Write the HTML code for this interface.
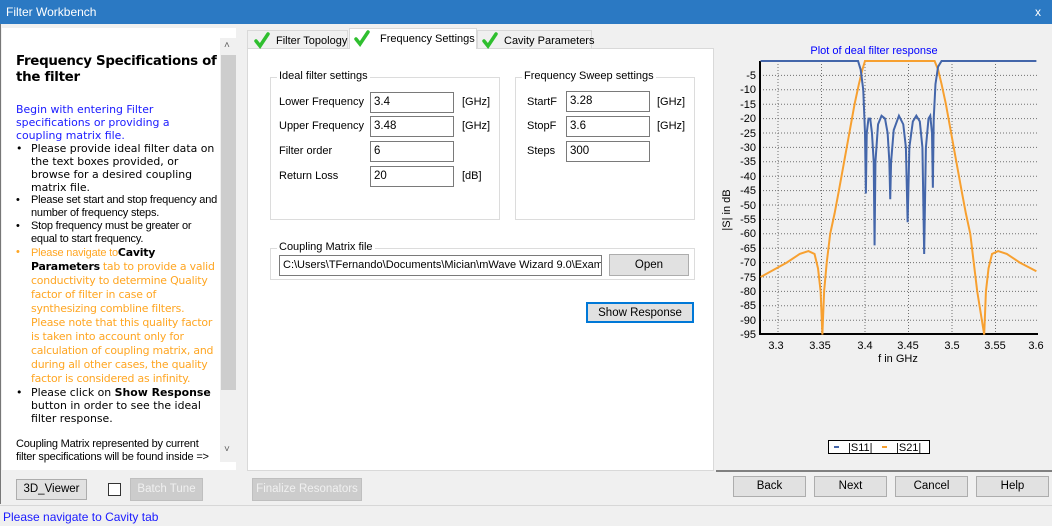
<!DOCTYPE html>
<html><head><meta charset="utf-8"><style>
*{margin:0;padding:0;box-sizing:border-box}
body{width:1052px;height:526px;overflow:hidden;background:#f0f0f0;font-family:"Liberation Sans",Arial,sans-serif;font-size:11px;color:#000;position:relative}
.a{position:absolute;white-space:nowrap}
.v{font-family:"DejaVu Sans",Verdana,sans-serif;font-size:10.9px;line-height:13px;white-space:normal}
.s{font-size:11px;line-height:13px;white-space:normal;letter-spacing:-0.2px}
.btn{position:absolute;background:#e1e1e1;border:1px solid #adadad;text-align:center;font-size:11.5px;white-space:nowrap}
.inp{position:absolute;background:#fff;border:1px solid #7a7a7a;font-size:11.5px;padding:3px 0 0 3px;height:21px;white-space:nowrap}
.gb{position:absolute;border:1px solid #dcdcdc}
.gb span{position:absolute;top:-8px;left:6px;background:#fff;padding:0 2px;font-size:11px;white-space:nowrap}
.lbl{position:absolute;font-size:11px;white-space:nowrap}
</style></head><body>
<div class="a" style="left:0;top:0;width:1052px;height:24px;background:#2b79c3;color:#fff;font-size:12px;padding:5px 0 0 6px">Filter Workbench</div>
<div class="a" style="right:0;top:0;width:28px;height:24px;background:#2b79c3;color:#fff;font-size:12px;text-align:center;padding-top:5px">x</div>
<div class="a" style="left:0;top:24px;width:1px;height:480px;background:#777"></div>
<!-- left pane -->
<div class="a" style="left:2px;top:28px;width:234px;height:442px;background:#fff;overflow:hidden">
 <div class="a" style="left:14px;top:26px;width:212px;font-family:'DejaVu Sans',Verdana,sans-serif;font-weight:bold;font-size:13.4px;line-height:16px;letter-spacing:-0.3px;white-space:normal">Frequency Specifications of the filter</div>
 <div class="a v" style="left:14px;top:75px;width:200px;color:#1a1aff">Begin with entering Filter specifications or providing a coupling matrix file.</div>
 <div class="a" style="left:14px;top:114px;width:204px;white-space:normal">
  <div class="v" style="position:relative;padding-left:15px"><span class="a" style="left:0">•</span>Please provide ideal filter data on the text boxes provided, or browse for a desired coupling matrix file.</div>
  <div class="s" style="position:relative;padding-left:15px"><span class="a" style="left:0">•</span>Please set start and stop frequency and number of frequency steps.</div>
  <div class="s" style="position:relative;padding-left:15px"><span class="a" style="left:0">•</span>Stop frequency must be greater or equal to start frequency.</div>
  <div class="s" style="position:relative;padding-left:15px;color:#ffa623"><span class="a" style="left:0">•</span>Please navigate to<b class="v" style="color:#000;font-weight:bold">Cavity Parameters</b> <span class="v">tab to provide a valid conductivity to determine Quality factor of filter in case of synthesizing combline filters. Please note that this quality factor is taken into account only for calculation of coupling matrix, and during all other cases, the quality factor is considered as infinity.</span></div>
  <div class="v" style="position:relative;padding-left:15px"><span class="a" style="left:0">•</span>Please click on <b>Show Response</b> button in order to see the ideal filter response.</div>
  <div class="s" style="margin-top:13px;width:200px;white-space:nowrap">Coupling Matrix represented by current<br>filter specifications will be found inside =&gt;</div>
 </div>
 <div class="a" style="left:218px;top:10px;width:17px;height:424px;background:#f0f0f0"></div>
 <div class="a" style="left:219px;top:27px;width:15px;height:335px;background:#cdcdcd"></div>
 <div class="a" style="left:222px;top:12px;font-size:10px;color:#606060">˄</div>
 <div class="a" style="left:222px;top:416px;font-size:10px;color:#606060">˅</div>
</div>
<!-- tabs -->
<div class="a" style="left:247px;top:30px;width:101px;height:19px;background:#f0f0f0;border:1px solid #d9d9d9;font-size:11px;padding:4px 0 0 28px">Filter Topology</div>
<div class="a" style="left:349px;top:28px;width:128px;height:21px;background:#fff;border:1px solid #d9d9d9;border-bottom:none;font-size:11px;padding:4px 0 0 30px">Frequency Settings</div>
<div class="a" style="left:477px;top:30px;width:115px;height:19px;background:#f0f0f0;border:1px solid #d9d9d9;font-size:11px;padding:4px 0 0 26px">Cavity Parameters</div>
<div class="a" style="left:247px;top:48px;width:467px;height:423px;background:#fff;border:1px solid #d9d9d9"></div>
<div class="a" style="left:350px;top:47px;width:126px;height:3px;background:#fff"></div>
<svg class="a" style="left:250px;top:30px" width="350" height="20"><g fill="none" stroke="#2fbf2f" stroke-width="3.5" stroke-linecap="round"><path d="M6 11l4 5 8-12"/><path d="M106 9l4 5 8-12"/><path d="M234 11l4 5 8-12"/></g></svg>
<!-- groups -->
<div class="gb" style="left:270px;top:77px;width:230px;height:143px"><span>Ideal filter settings</span></div>
<div class="gb" style="left:515px;top:77px;width:180px;height:143px"><span>Frequency Sweep settings</span></div>
<div class="lbl" style="left:279px;top:96px">Lower Frequency</div>
<div class="lbl" style="left:279px;top:120px">Upper Frequency</div>
<div class="lbl" style="left:279px;top:145px">Filter order</div>
<div class="lbl" style="left:279px;top:170px">Return Loss</div>
<div class="inp" style="left:370px;top:92px;width:84px">3.4</div>
<div class="inp" style="left:370px;top:116px;width:84px">3.48</div>
<div class="inp" style="left:370px;top:141px;width:84px">6</div>
<div class="inp" style="left:370px;top:166px;width:84px">20</div>
<div class="lbl" style="left:462px;top:96px">[GHz]</div>
<div class="lbl" style="left:462px;top:120px">[GHz]</div>
<div class="lbl" style="left:462px;top:170px">[dB]</div>
<div class="lbl" style="left:527px;top:96px">StartF</div>
<div class="lbl" style="left:527px;top:120px">StopF</div>
<div class="lbl" style="left:527px;top:145px">Steps</div>
<div class="inp" style="left:566px;top:91px;width:84px">3.28</div>
<div class="inp" style="left:566px;top:116px;width:84px">3.6</div>
<div class="inp" style="left:566px;top:141px;width:84px">300</div>
<div class="lbl" style="left:657px;top:96px">[GHz]</div>
<div class="lbl" style="left:657px;top:120px">[GHz]</div>
<div class="gb" style="left:270px;top:248px;width:425px;height:32px"><span>Coupling Matrix file</span></div>
<div class="inp" style="left:279px;top:255px;width:323px;height:21px;overflow:hidden;font-size:11px">C:\Users\TFernando\Documents\Mician\mWave Wizard 9.0\Examples</div>
<div class="btn" style="left:609px;top:254px;width:80px;height:22px;padding-top:4px">Open</div>
<div class="btn" style="left:586px;top:302px;width:108px;height:21px;border:2px solid #0078d7;padding-top:3px">Show Response</div>
<!-- chart -->
<svg class="a" style="left:716px;top:28px" width="336" height="443" viewBox="716 28 336 443">
<rect x="716" y="28" width="336" height="443" fill="#f0f0f0"/>
<text x="874" y="54" font-family="Liberation Sans" font-size="11" fill="#0000ff" text-anchor="middle">Plot of deal filter response</text>
<g stroke="#707070" stroke-dasharray="1 2" stroke-width="1">
<path d="M778 61V334M821.5 61V334M865 61V334M908.5 61V334M952 61V334M995.5 61V334"/>
<path d="M760 75.4H1037M760 89.8H1037M760 104.2H1037M760 118.6H1037M760 133H1037M760 147.4H1037M760 161.8H1037M760 176.2H1037M760 190.6H1037M760 205H1037M760 219.4H1037M760 233.8H1037M760 248.2H1037M760 262.6H1037M760 277H1037M760 291.4H1037M760 305.8H1037M760 320.2H1037"/>
</g>
<path d="M760 61V334H1038" fill="none" stroke="#000" stroke-width="2"/>
<g font-family="Liberation Sans" font-size="11" text-anchor="end">
<text x="756" y="79">-5</text><text x="756" y="93">-10</text><text x="756" y="108">-15</text><text x="756" y="122">-20</text><text x="756" y="137">-25</text><text x="756" y="151">-30</text><text x="756" y="165">-35</text><text x="756" y="180">-40</text><text x="756" y="194">-45</text><text x="756" y="209">-50</text><text x="756" y="223">-55</text><text x="756" y="237">-60</text><text x="756" y="252">-65</text><text x="756" y="266">-70</text><text x="756" y="281">-75</text><text x="756" y="295">-80</text><text x="756" y="309">-85</text><text x="756" y="324">-90</text><text x="756" y="338">-95</text>
</g>
<g font-family="Liberation Sans" font-size="11" text-anchor="middle">
<text x="776" y="349">3.3</text><text x="820" y="349">3.35</text><text x="865" y="349">3.4</text><text x="908" y="349">3.45</text><text x="952" y="349">3.5</text><text x="995" y="349">3.55</text><text x="1036" y="349">3.6</text>
<text x="898" y="362">f in GHz</text>
<text transform="translate(730 210) rotate(-90)" text-anchor="middle">|S| in dB</text>
</g>
<g transform="translate(778 61) scale(870 2.88)" fill="none">
<polyline vector-effect="non-scaling-stroke" stroke="#f7a030" stroke-width="2" points="-0.02,75 0.01,70 0.025,67 0.035,66 0.042,67 0.046,72 0.049,80 0.051,95 0.053,80 0.056,70 0.06,60 0.065,53 0.07,45 0.076,35 0.082,25 0.088,15 0.093,8 0.097,3 0.1,0 0.18,0 0.184,3 0.188,8 0.193,15 0.199,25 0.205,35 0.211,45 0.216,53 0.221,60 0.225,70 0.229,80 0.237,95 0.239,80 0.242,72 0.246,67 0.253,66 0.263,67 0.278,70 0.297,73"/>
<polyline vector-effect="non-scaling-stroke" stroke="#4466aa" stroke-width="2" points="-0.02,0 0.092,0 0.095,3 0.098,10 0.1,25 0.101,46 0.102,25 0.104,20 0.106,20 0.108,25 0.11,35 0.111,64 0.112,35 0.115,22 0.119,19 0.123,20 0.126,25 0.128,35 0.129,48 0.130,35 0.133,24 0.139,19 0.144,22 0.147,30 0.149,56 0.151,30 0.155,21 0.159,19 0.163,21 0.166,30 0.168,67 0.170,30 0.173,20 0.175,19 0.177,25 0.178,44 0.179,20 0.181,8 0.184,2 0.188,0 0.297,0"/>
</g>
<rect x="828.5" y="440.5" width="101" height="13" fill="#fff" stroke="#000"/>
<path d="M834 447h5" stroke="#4466aa" stroke-width="2"/><path d="M882 447h5" stroke="#f7a030" stroke-width="2"/>
<text x="848" y="451" font-family="Liberation Sans" font-size="11">|S11|</text>
<text x="896" y="451" font-family="Liberation Sans" font-size="11">|S21|</text>
</svg>
<div class="a" style="left:716px;top:470px;width:336px;height:2px;background:#808080"></div>
<!-- bottom -->
<div class="btn" style="left:16px;top:479px;width:71px;height:21px;padding-top:3px">3D_Viewer</div>
<div class="a" style="left:108px;top:483px;width:13px;height:13px;background:#fff;border:1px solid #333"></div>
<div class="btn" style="left:130px;top:478px;width:73px;height:23px;padding-top:4px;background:#cccccc;border-color:#bfbfbf;color:#f0f0f0">Batch Tune</div>
<div class="btn" style="left:252px;top:478px;width:110px;height:23px;padding-top:4px;background:#cccccc;border-color:#bfbfbf;color:#f0f0f0">Finalize Resonators</div>
<div class="btn" style="left:733px;top:476px;width:73px;height:21px;padding-top:3px">Back</div>
<div class="btn" style="left:814px;top:476px;width:73px;height:21px;padding-top:3px">Next</div>
<div class="btn" style="left:895px;top:476px;width:73px;height:21px;padding-top:3px">Cancel</div>
<div class="btn" style="left:976px;top:476px;width:73px;height:21px;padding-top:3px">Help</div>
<div class="a" style="left:0;top:505px;width:1052px;height:1px;background:#d7d7d7"></div>
<div class="a" style="left:3px;top:510px;color:#1a1aff;font-size:12px">Please navigate to Cavity tab</div>
</body></html>
